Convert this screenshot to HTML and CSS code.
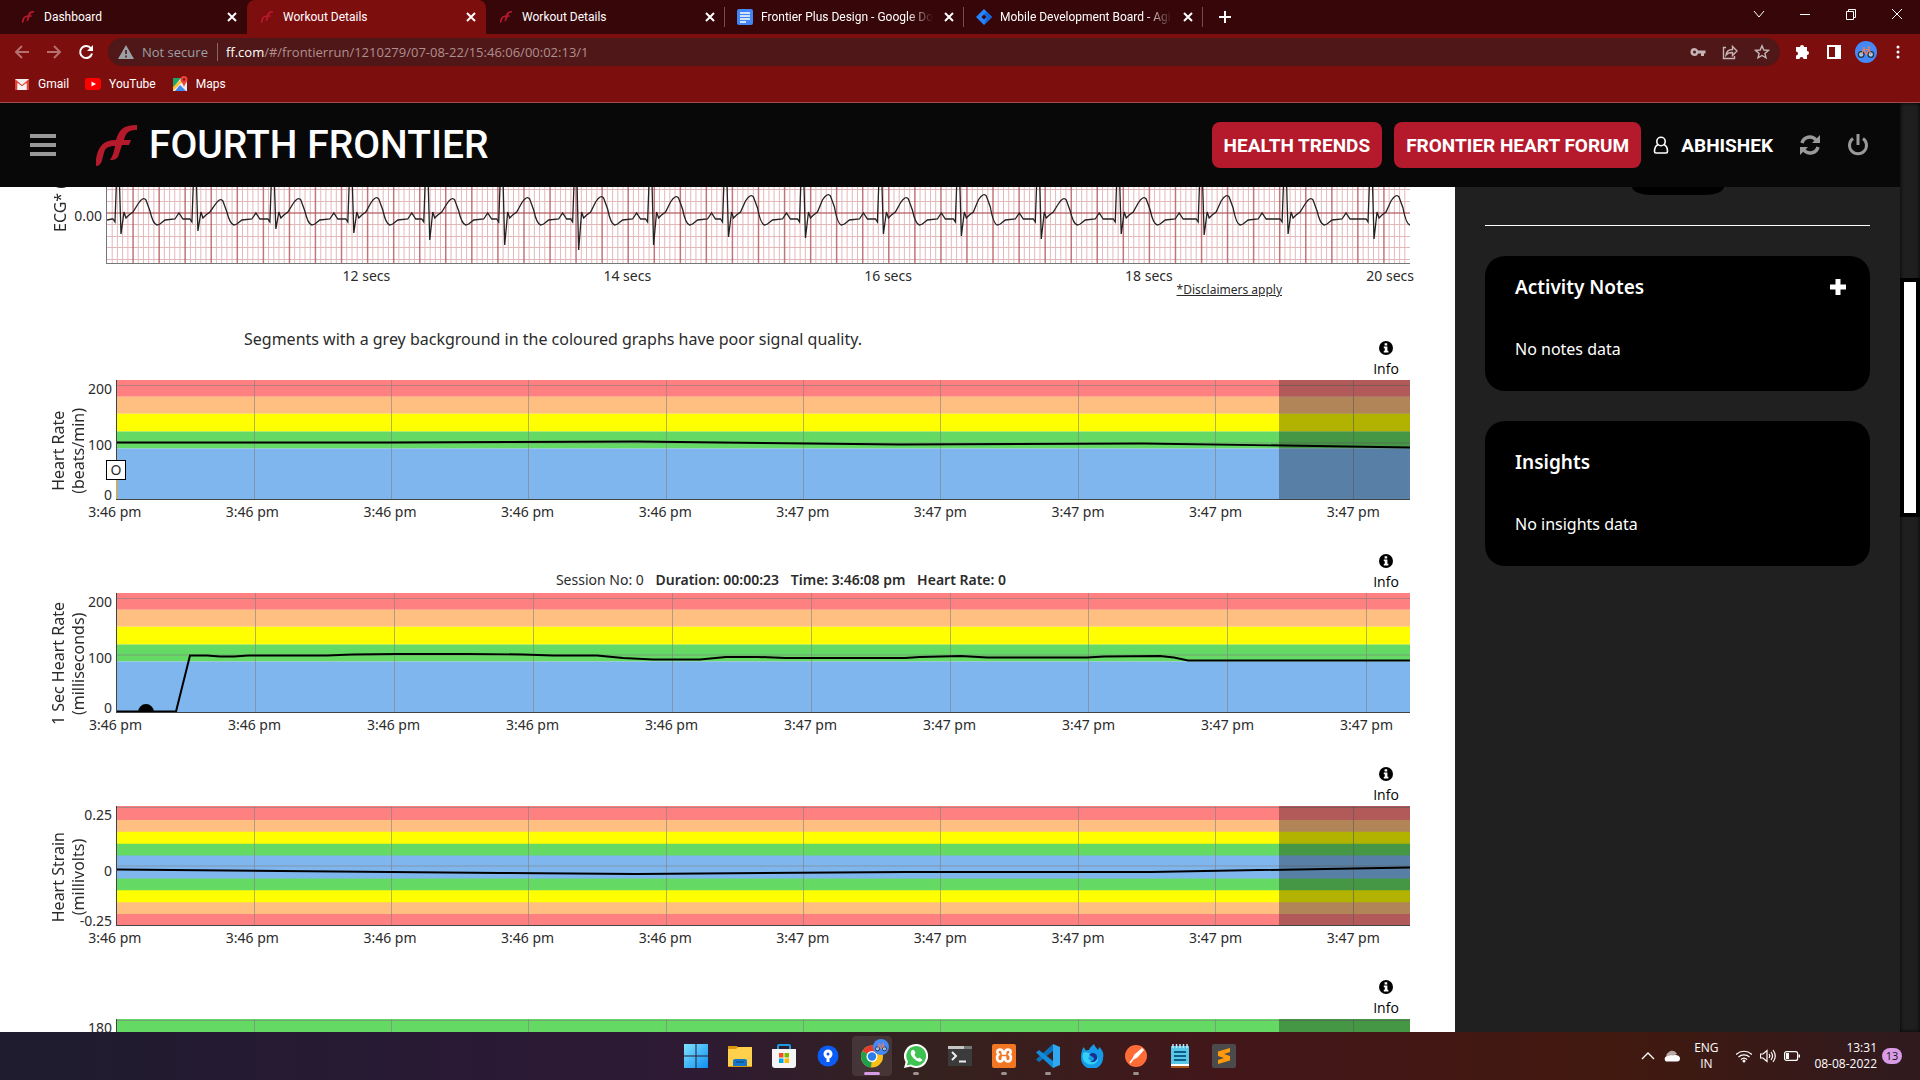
FILE: index.html
```html
<!DOCTYPE html>
<html lang="en">
<head>
<meta charset="utf-8">
<title>Workout Details</title>
<link rel="stylesheet" href="styles.css">
</head>
<body>
<svg class="defs" aria-hidden="true">
  <symbol id="ff" viewBox="0 0 41 41"><path d="M41 0v5c-8 0-11 2-13 10h7l-2 5h-7l-3 9c-1 4-3 6-9 6 3-4 4-9 5-14-7 0-10 2-11 7C6 34 6 41 0 41V34C2 22 7 15 20 15 23 5 27 0 41 0z" fill="#b41a2b"/></symbol>
  <symbol id="x" viewBox="0 0 16 16"><path d="M4 4l8 8M12 4l-8 8" stroke="#fff" stroke-width="2"/></symbol>
  <symbol id="info" viewBox="0 0 14 14"><circle cx="7" cy="7" r="7"/><path d="M5.6 2.2h2.6v2.2H5.600zM4.800 5.600h3.600v4.200h1V11.400H4.800V9.800h1V7.200h-1z" fill="#fff"/></symbol>
  <symbol id="bike" viewBox="0 0 22 22"><circle cx="11" cy="11" r="11" fill="#4489f7"/><g fill="none" stroke="#243447" stroke-width="1.300"><circle cx="6.200" cy="13.500" r="2.800" fill="#9fd0f5"/><circle cx="15.800" cy="13.500" r="2.800" fill="#9fd0f5"/></g><path d="M6.500 13.500l2-5h5.500l2 5M8.500 8.500l3 5 2.500-5M14 8l-.5-2h2M7 7h3" fill="none" stroke="#f0805a" stroke-width="1.200"/></symbol>
</svg>

<div class="browser">
  <div class="tabs">
    <div class="tab"><svg class="ico"><use href="#ff" x="2" y="2" width="12" height="12"/></svg><span class="tab-title">Dashboard</span><button class="bare" aria-label="Close tab"><svg class="ico"><use href="#x"/></svg></button></div>
    <div class="tab active"><svg class="ico"><use href="#ff" x="2" y="2" width="12" height="12"/></svg><span class="tab-title">Workout Details</span><button class="bare" aria-label="Close tab"><svg class="ico"><use href="#x"/></svg></button></div>
    <div class="tab ruled"><svg class="ico"><use href="#ff" x="2" y="2" width="12" height="12"/></svg><span class="tab-title">Workout Details</span><button class="bare" aria-label="Close tab"><svg class="ico"><use href="#x"/></svg></button></div>
    <div class="tab ruled"><svg class="ico" viewBox="0 0 16 16"><rect width="16" height="16" rx="2" fill="#4285f4"/><path d="M3 4h10M3 7h10M3 10h10M3 13h6" stroke="#fff" stroke-width="1.600"/></svg><span class="tab-title fade">Frontier Plus Design - Google Do</span><button class="bare" aria-label="Close tab"><svg class="ico"><use href="#x"/></svg></button></div>
    <div class="tab ruled"><svg class="ico" viewBox="0 0 16 16"><path d="M8 0l8 8-8 8-8-8z" fill="#2684ff"/><path d="M8 5l3 3-3 8 8-8-5-5z" fill="#1565d8"/><path d="M8 5.500L10.500 8 8 10.500 5.500 8z" fill="#370608"/></svg><span class="tab-title fade">Mobile Development Board - Agi</span><button class="bare" aria-label="Close tab"><svg class="ico"><use href="#x"/></svg></button></div>
    <button class="bare new-tab" aria-label="New tab"><svg class="ico" viewBox="0 0 16 16"><path d="M8 2v12M2 8h12" stroke="#fff" stroke-width="2"/></svg></button>
    <div class="window-buttons">
      <button class="bare" aria-label="Search tabs"><svg class="ico" viewBox="0 0 16 16"><path d="M3 5l5 6 5-6" class="thin"/></svg></button>
      <button class="bare" aria-label="Minimise"><svg class="ico" viewBox="0 0 16 16"><path d="M3 8.500h10" class="thin"/></svg></button>
      <button class="bare" aria-label="Restore"><svg class="ico" viewBox="0 0 16 16"><path d="M3.500 5.500h7v8h-7zM5.500 5.500v-2h7v8h-2" class="thin"/></svg></button>
      <button class="bare" aria-label="Close"><svg class="ico" viewBox="0 0 16 16"><path d="M3 3l10 10M13 3L3 13" class="thin"/></svg></button>
    </div>
  </div>

  <div class="toolbar">
    <div class="nav">
      <button class="bare" aria-label="Back"><svg class="ico" viewBox="0 0 16 16"><path d="M15 8H2M8 2L2 8l6 6" class="dim"/></svg></button>
      <button class="bare" aria-label="Forward"><svg class="ico" viewBox="0 0 16 16"><path d="M1 8h13M8 2l6 6-6 6" class="dim"/></svg></button>
      <button class="bare" aria-label="Reload"><svg class="ico" viewBox="0 0 16 16"><path d="M13 4.500A6 6 0 1 0 14 9.500" fill="none" stroke="#fff" stroke-width="2"/><path d="M15 1v6H9z" fill="#fff"/></svg></button>
    </div>
    <div class="omnibox">
      <svg class="ico" viewBox="0 0 16 16"><path d="M8 1l8 14H0z" fill="#9aa0a6"/><path d="M8 6v4M8 11.500v2" stroke="#4f1718" stroke-width="1.600"/></svg>
      <span class="secure">Not secure</span>
      <span class="url"><b>ff.com</b>/#/frontierrun/1210279/07-08-22/15:46:06/00:02:13/1</span>
      <button class="bare" aria-label="Passwords"><svg class="ico" viewBox="0 0 16 16"><path d="M4.500 4a4 4 0 1 0 3.700 5.500H11V12h3V9.500h1.500v-3H8.200A4 4 0 0 0 4.500 4zm0 2.500a1.500 1.500 0 1 1 0 3 1.500 1.500 0 0 1 0-3z" fill="#c5b5b5"/></svg></button>
      <button class="bare" aria-label="Share"><svg class="ico" viewBox="0 0 16 16"><path d="M4 3.500H1.500v11h11V12M4 11c.5-4 3-5.500 6.500-5.500V2.500L15 7l-4.500 4.500V8.500C7.500 8.500 5.500 9 4 11z" class="pale"/></svg></button>
      <button class="bare" aria-label="Bookmark"><svg class="ico" viewBox="0 0 16 16"><path d="M8 1.800l1.800 4.200 4.600.4-3.500 3 1.100 4.500L8 11.500l-4 2.400 1.100-4.500-3.500-3 4.600-.4z" class="pale"/></svg></button>
    </div>
    <div class="tools">
      <button class="bare" aria-label="Extensions"><svg class="ico" viewBox="0 0 16 16"><path d="M6 3a2 2 0 0 1 4 0h3v4a2 2 0 0 1 0 4v4H9.500a2 2 0 0 0-4 0H2v-3.500a2 2 0 0 0 0-4V3z" fill="#fff"/></svg></button>
      <button class="bare" aria-label="Side panel"><svg class="ico" viewBox="0 0 16 16"><path d="M1 1h14v14H1zM3 3v10h6V3z" fill="#fff" fill-rule="evenodd"/></svg></button>
      <button class="bare" aria-label="Profile"><svg class="avatar"><use href="#bike"/></svg></button>
      <button class="bare" aria-label="Menu"><svg class="ico" viewBox="0 0 16 16" fill="#fff"><circle cx="8" cy="3" r="1.500"/><circle cx="8" cy="8" r="1.500"/><circle cx="8" cy="13" r="1.500"/></svg></button>
    </div>
  </div>

  <div class="bookmarks">
    <a href="#"><svg class="ico" viewBox="0 0 16 16"><path d="M1 3h14v11H1z" fill="#eee"/><path d="M1 14V3l7 6 7-6v11h-2.500V7L8 10.500 3.500 7v7z" fill="#e34133"/><path d="M3.500 7v7h9V7L8 10.500z" fill="#f3f3f3"/></svg>Gmail</a>
    <a href="#"><svg class="ico" viewBox="0 0 16 16"><rect y="2" width="16" height="12" rx="3" fill="#f00"/><path d="M6.500 5.500v5L11 8z" fill="#fff"/></svg>YouTube</a>
    <a href="#"><svg class="ico" viewBox="0 0 16 16"><path d="M1 2h14v13H1z" fill="#eee"/><path d="M1 2h8L1 12z" fill="#1fa463"/><path d="M3 15l5-6 6 6z" fill="#4285f4"/><path d="M1 11l8-7 1 2-9 9z" fill="#fbc02d"/><path d="M12 0a3.500 3.500 0 0 1 3.500 3.500C15.500 6 13 7 12 11c-1-4-3.500-5-3.500-7.500A3.500 3.500 0 0 1 12 0z" fill="#ea4335"/><circle cx="12" cy="3.500" r="1.200" fill="#811"/></svg>Maps</a>
  </div>
</div>

<div class="page">
  <div class="app">
    <header class="site-header">
      <button class="bare" aria-label="Menu"><svg class="burger" viewBox="0 0 26 22"><path d="M0 2h26M0 11h26M0 20h26" stroke="#999" stroke-width="4"/></svg></button>
      <a class="brand" href="#"><svg class="brand-mark"><use href="#ff"/></svg>FOURTH FRONTIER</a>
      <button class="pill">HEALTH TRENDS</button>
      <button class="pill">FRONTIER HEART FORUM</button>
      <a class="user" href="#"><svg class="person" viewBox="0 0 16 18"><circle cx="8" cy="5.500" r="4.200"/><path d="M5 8.500C2 10 1.500 13 1.500 15.500 1.500 16.500 2 17 3 17h10c1 0 1.500-.5 1.500-1.500 0-2.500-.5-5.500-3.500-7"/></svg>ABHISHEK</a>
      <button class="bare" aria-label="Refresh"><svg class="act" viewBox="0 0 22 22"><path d="M3 9a8 8 0 0 1 14-3M19 13a8 8 0 0 1-14 3" fill="none" stroke="#999" stroke-width="3.500"/><path d="M21 1v8h-8zM1 21v-8h8z" fill="#999"/></svg></button>
      <button class="bare" aria-label="Log out"><svg class="act" viewBox="0 0 22 22"><path d="M6 4.500a8.500 8.500 0 1 0 10 0M11 0v11" fill="none" stroke="#999" stroke-width="3"/></svg></button>
    </header>

    <div class="columns">
      <main class="charts">
        <section class="ecg">
          <div class="ecg-title">ECG* (</div>
          <div class="ecg-zero">0.00</div>
          <div class="ecg-body">
            <svg class="ecg-plot" viewBox="0 0 1304 76" preserveAspectRatio="none">
              <path id="ecg-minor" class="minor"/><path id="ecg-major" class="major"/>
              <path d="M0 26h1304" class="major"/><path id="ecg-wave" class="wave"/>
            </svg>
            <div class="ecg-axis"><span>12 secs</span><span>14 secs</span><span>16 secs</span><span>18 secs</span><span>20 secs</span></div>
          </div>
        </section>
        <div class="disclaimer"><a href="#">*Disclaimers apply</a></div>

        <section class="chart">
          <div class="head">
            <p class="note">Segments with a grey background in the coloured graphs have poor signal quality.</p>
            <button class="info"><svg><use href="#info"/></svg>Info</button>
          </div>
          <div class="y-title">Heart Rate<br>(beats/min)</div>
          <div class="y-axis"><span>200</span><span>100</span><span>0</span></div>
          <div class="plot">
            <svg viewBox="0 0 1293 120" preserveAspectRatio="none">
              <path d="M0 0h1293v17H0z" class="red"/><path d="M0 17h1293v17H0z" class="orange"/><path d="M0 34h1293v18H0z" class="yellow"/><path d="M0 52h1293v17H0z" class="green"/><path d="M0 69h1293v51H0z" class="blue"/>
              <path class="grid" d="M0 5.500h1293M0 63.500h1293M137.500 0v120M274.500 0v120M411.500 0v120M549.500 0v120M686.500 0v120M823.500 0v120M961.500 0v120M1098.500 0v120M1236.500 0v120"/>
              <path d="M0 63H270L520 62 783 65 1026 64 1293 68" class="line"/>
              <path d="M1162 0h131v120h-131z" class="poor"/>
            </svg>
            <span class="marker">O</span>
          </div>
          <div class="x-axis"><span>3:46 pm</span><span>3:46 pm</span><span>3:46 pm</span><span>3:46 pm</span><span>3:46 pm</span><span>3:47 pm</span><span>3:47 pm</span><span>3:47 pm</span><span>3:47 pm</span><span>3:47 pm</span></div>
        </section>

        <section class="chart">
          <div class="head">
            <p class="readout">Session No: 0 <b>Duration: 00:00:23</b> <b>Time: 3:46:08 pm</b> <b>Heart Rate: 0</b></p>
            <button class="info"><svg><use href="#info"/></svg>Info</button>
          </div>
          <div class="y-title">1 Sec Heart Rate<br>(milliseconds)</div>
          <div class="y-axis"><span>200</span><span>100</span><span>0</span></div>
          <div class="plot">
            <svg viewBox="0 0 1293 120" preserveAspectRatio="none">
              <path d="M0 0h1293v17H0z" class="red"/><path d="M0 17h1293v17H0z" class="orange"/><path d="M0 34h1293v18H0z" class="yellow"/><path d="M0 52h1293v17H0z" class="green"/><path d="M0 69h1293v51H0z" class="blue"/>
              <path class="grid" d="M0 5.500h1293M0 62.500h1293M138.500 0v120M277.500 0v120M416.500 0v120M555.500 0v120M694.500 0v120M833.500 0v120M971.500 0v120M1110.500 0v120M1249.500 0v120"/>
              <path d="M0 119.500H59L73 63H90L103 64H117L131 63H210L235 62 280 61.500H350L406 62 436 63H480L506 65.500 536 67H583L609 64.500H641L668 65.500H788L803 64.500 844 63.500 870 65H970L987 64 1043 63.500 1057 65 1071 68H1293" class="line"/>
              <circle cx="29" cy="120" r="8"/>
            </svg>
          </div>
          <div class="x-axis wide"><span>3:46 pm</span><span>3:46 pm</span><span>3:46 pm</span><span>3:46 pm</span><span>3:46 pm</span><span>3:47 pm</span><span>3:47 pm</span><span>3:47 pm</span><span>3:47 pm</span><span>3:47 pm</span></div>
        </section>

        <section class="chart">
          <div class="head"><button class="info"><svg><use href="#info"/></svg>Info</button></div>
          <div class="y-title">Heart Strain<br>(millivolts)</div>
          <div class="y-axis"><span>0.25</span><span>0</span><span>-0.25</span></div>
          <div class="plot">
            <svg viewBox="0 0 1293 120" preserveAspectRatio="none">
              <path d="M0 0h1293v120H0z" class="red"/><path d="M0 14h1293v95H0z" class="orange"/><path d="M0 26h1293v71H0z" class="yellow"/><path d="M0 38h1293v47H0z" class="green"/><path d="M0 50h1293v23H0z" class="blue"/>
              <path class="grid" d="M0 1.500h1293M0 60.500h1293M137.500 0v120M274.500 0v120M411.500 0v120M549.500 0v120M686.500 0v120M823.500 0v120M961.500 0v120M1098.500 0v120M1236.500 0v120"/>
              <path d="M0 64L383 67.500 520 68.500 789 66.500H1034L1293 62" class="line"/>
              <path d="M1162 0h131v120h-131z" class="poor"/>
            </svg>
          </div>
          <div class="x-axis"><span>3:46 pm</span><span>3:46 pm</span><span>3:46 pm</span><span>3:46 pm</span><span>3:46 pm</span><span>3:47 pm</span><span>3:47 pm</span><span>3:47 pm</span><span>3:47 pm</span><span>3:47 pm</span></div>
        </section>

        <section class="chart">
          <div class="head"><button class="info"><svg><use href="#info"/></svg>Info</button></div>
          <div class="y-title"></div>
          <div class="y-axis"><span>180</span></div>
          <div class="plot">
            <svg viewBox="0 0 1293 120" preserveAspectRatio="none">
              <path d="M0 0h1293v120H0z" class="green"/>
              <path class="grid" d="M0 1.500h1293M137.500 0v120M274.500 0v120M411.500 0v120M549.500 0v120M686.500 0v120M823.500 0v120M961.500 0v120M1098.500 0v120M1236.500 0v120"/>
              <path d="M1162 0h131v120h-131z" class="poor"/>
            </svg>
          </div>
        </section>
      </main>

      <aside class="side">
        <div class="stub"></div>
        <hr>
        <section class="card">
          <div class="card-head"><h2>Activity Notes</h2><button class="bare" aria-label="Add note"><svg class="ico" viewBox="0 0 16 16"><path d="M8 0v16M0 8h16" stroke="#fff" stroke-width="5"/></svg></button></div>
          <p>No notes data</p>
        </section>
        <section class="card roomy">
          <div class="card-head"><h2>Insights</h2></div>
          <p>No insights data</p>
        </section>
      </aside>
    </div>
  </div>
  <div class="scrollbar"><div class="thumb"></div></div>
</div>

<footer class="taskbar">
  <div class="spacer"></div>
  <nav class="apps">
    <button class="bare" aria-label="Start"><svg viewBox="0 0 24 24"><defs><linearGradient id="w" x2="1" y2="1"><stop stop-color="#7fe3ff"/><stop offset="1" stop-color="#0b8fef"/></linearGradient></defs><path d="M0 0h11.500v11.500H0zM12.500 0H24v11.500H12.500zM0 12.500h11.500V24H0zM12.500 12.500H24V24H12.500z" fill="url(#w)"/></svg></button>
    <button class="bare" aria-label="File Explorer"><svg viewBox="0 0 24 24"><path d="M0 2h9l2 3h13v18H0z" fill="#d9980b"/><path d="M0 5h8l2-2h14v19H0z" fill="#ffd04c"/><path d="M5 22v-5q0-2 2-2h10q2 0 2 2v5z" fill="#1477c9"/><path d="M8 18h8" stroke="#0b5394" stroke-width="1.500"/></svg></button>
    <button class="bare" aria-label="Store"><svg viewBox="0 0 24 24"><path d="M6 6V2q0-1 1-1h10q1 0 1 1v4" fill="none" stroke="#1b9de2" stroke-width="2"/><path d="M0 5h24v16q0 3-3 3H3q-3 0-3-3z" fill="#f5f5f5"/><path d="M7 9h4.500v4.500H7z" fill="#f25022"/><path d="M12.500 9H17v4.500h-4.500z" fill="#7fba00"/><path d="M7 14.500h4.500V19H7z" fill="#00a4ef"/><path d="M12.500 14.500H17V19h-4.500z" fill="#ffb900"/></svg></button>
    <button class="bare" aria-label="Maps"><svg viewBox="0 0 24 24"><circle cx="12" cy="12" r="10.500" fill="#0a5cf5"/><circle cx="12" cy="10" r="4.500" fill="#fff"/><path d="M10.500 10h3v8h-3z" fill="#fff"/><circle cx="12" cy="10" r="1.500" fill="#0a5cf5"/></svg></button>
    <button class="bare current" aria-label="Chrome"><svg viewBox="0 0 24 24"><circle cx="12" cy="12.500" r="11" fill="#fbc116"/><path d="M12 12.500L2.500 7A11 11 0 0 1 21.500 7z" fill="#e33b2e"/><path d="M12 12.500L2.500 7a11 11 0 0 0 8.500 16.500z" fill="#1fa04c"/><circle cx="12" cy="12.500" r="5.500" fill="#fff"/><circle cx="12" cy="12.500" r="4.200" fill="#2b7de9"/></svg><svg class="badge" viewBox="0 0 22 22"><use href="#bike" width="22" height="22"/></svg></button>
    <button class="bare open" aria-label="WhatsApp"><svg viewBox="0 0 24 24"><path d="M12 0a12 12 0 1 1-5.500 22.600L0 24l1.600-6A12 12 0 0 1 12 0z" fill="#fff"/><path d="M12 2a10 10 0 1 1-5 18.600L2.800 21.500 4 17.500A10 10 0 0 1 12 2z" fill="#3ec251"/><path d="M8 6c-3 3 0 7 3 9.500s6 3 7.500.5l-3-2.500-1.500 1c-2-1-3-2.500-3.500-4l1-1.500L10 6z" fill="#fff"/></svg></button>
    <button class="bare" aria-label="Terminal"><svg viewBox="0 0 24 24"><path d="M0 2h24v20H0z" fill="#3b3b3b"/><path d="M0 2h16v3H0z" fill="#c5c5c5"/><path d="M16 2h8v3h-8z" fill="#777"/><path d="M4 8l4 4-4 4M11 17.500h7" fill="none" stroke="#eee" stroke-width="2"/></svg></button>
    <button class="bare open" aria-label="XAMPP"><svg viewBox="0 0 24 24"><rect width="24" height="24" rx="2" fill="#f37623"/><path d="M8 5.500c3 0 3 3 3 4h2c0-1 0-4 3-4s3.500 3 1.500 5c2.500 2 1.500 7-1.500 7s-3-3-3-4h-2c0 1 0 4-3 4s-4-5-1.500-7c-2-2-1.500-5 1.500-5z" fill="none" stroke="#fff" stroke-width="2.600"/></svg></button>
    <button class="bare open" aria-label="VS Code"><svg viewBox="0 0 24 24"><path d="M17 0l7 3v18l-7 3z" fill="#2fa8f0"/><path d="M17 0v7L3 18l-3-2.500z" fill="#0a72bd"/><path d="M17 24v-7L3 6 0 8.500z" fill="#138ddb"/></svg></button>
    <button class="bare" aria-label="Firefox"><svg viewBox="0 0 24 24"><path d="M14 0c1 3 3 4 4 6l1.500-3C23 7 24 10 23 14a11 11 0 0 1-22 0C1 10 1.500 7 3.500 3L6 6.500 9 6c1-3 3-4 5-6z" fill="#159be8"/><path d="M3 9c3-2 6 0 9 1l-4 4c2 4 8 4 10-1 1 6-5 9-10 7s-6-7-5-11z" fill="#35d0f7"/><path d="M9 11a4.500 4.500 0 1 1 1 6c4 0 5-2 3-4z" fill="#1a2f8e"/></svg></button>
    <button class="bare open" aria-label="Postman"><svg viewBox="0 0 24 24"><circle cx="12" cy="12" r="11" fill="#ff6c37"/><path d="M18 5l-7 6-2 4 4-2 6-7zM9 15l-3 4" stroke="#fff" stroke-width="1.500" fill="#fff"/></svg></button>
    <button class="bare" aria-label="Notepad"><svg viewBox="0 0 24 24"><path d="M3 2h18v20H3z" fill="#59c8e8"/><path d="M3 21h18v3H3z" fill="#a6541a"/><path d="M3 20h18v2H3z" fill="#fff"/><path d="M6 8h12M6 12h12M6 16h12" stroke="#0d5f85" stroke-width="1.800"/><path d="M5 0v4M8.500 0v4M12 0v4M15.500 0v4M19 0v4" stroke="#bdeaf7" stroke-width="1.500"/></svg></button>
    <button class="bare" aria-label="Sublime Text"><svg viewBox="0 0 24 24"><rect width="24" height="24" rx="2" fill="#4b4b4b"/><path d="M18 4v4l-6 2 6 2v4.500L6 20v-4l6-2-6-2V7.500z" fill="#ff9a0c"/></svg></button>
  </nav>
  <div class="tray">
    <svg viewBox="0 0 16 16"><path d="M2 11l6-6 6 6" fill="none" stroke="#fff" stroke-width="1.300"/></svg>
    <svg viewBox="0 0 16 16"><path d="M3 10a4 4 0 0 1 2-6c2-2 6-2 8 2z" fill="#b9aaa9"/><path d="M2 13.500a3 3 0 0 1 0-5c2 0 4-2 7-1 1-1 7-1 7 3 0 2-1 3-3 3z" fill="#fff"/></svg>
    <div class="lang">ENG<br>IN</div>
    <svg viewBox="0 0 16 16"><path d="M0 6.500a11.500 11.500 0 0 1 16 0M2.500 9a8 8 0 0 1 11 0M5 11.500a4.500 4.500 0 0 1 6 0" fill="none" stroke="#fff" stroke-width="1.200"/><circle cx="8" cy="13" r="1.500" fill="#fff"/></svg>
    <svg viewBox="0 0 16 16"><path d="M.5 6H3l4-3.500v11L3 10H.500zM9 6q1.500 2 0 4M11 4q3 4 0 8M13 2q4.500 6 0 12" fill="none" stroke="#fff" stroke-width="1.200"/></svg>
    <svg viewBox="0 0 16 16"><rect x=".6" y="3.600" width="13" height="8.800" rx="2" fill="none" stroke="#fff" stroke-width="1.200"/><path d="M2 5h3v6H2zM14.500 6.500H16v3h-1.500z" fill="#fff"/></svg>
    <div class="clock">13:31<br>08-08-2022</div>
    <span class="count">13</span>
  </div>
</footer>
<script src="script.js"></script>
</body>
</html>
```
FILE: styles.css
```css
* { box-sizing: border-box; }
body {
  margin: 0;
  height: 100vh;
  display: flex;
  flex-direction: column;
  overflow: hidden;
  font-family: "Noto Sans", sans-serif;
  font-size: 14px;
  color: #2b2b2b;
  background: #fff;
}
p, h2 { margin: 0; }
.defs { position: absolute; width: 0; height: 0; }
.bare {
  display: flex;
  align-items: center;
  justify-content: center;
  padding: 0;
  border: 0;
  background: none;
  color: inherit;
}
.ico { display: block; flex: none; width: 16px; height: 16px; }
.thin { fill: none; stroke: #fff; stroke-width: 1; }
.dim { fill: none; stroke: #b57070; stroke-width: 2; }
.pale { fill: none; stroke: #c5b5b5; stroke-width: 1.4; }

/* Browser frame */
.browser {
  flex: none;
  background: #7c0e0e;
  border-bottom: 1px solid #a34a4a;
  color: #fff;
  font-family: Roboto, sans-serif;
  font-size: 12px;
}
.tabs { display: flex; height: 34px; padding-left: 8px; background: #370608; }
.tab {
  position: relative;
  flex: 0 1 239px;
  min-width: 0;
  display: flex;
  align-items: center;
  gap: 8px;
  padding: 0 7px 0 12px;
}
.tab.active { background: #7c0e0e; border-radius: 8px 8px 0 0; }
.tab.ruled::after {
  content: "";
  position: absolute;
  right: 0;
  top: 7px;
  height: 20px;
  border-right: 1px solid #7a4a4b;
}
.tab-title { flex: 1; overflow: hidden; white-space: nowrap; }
.tab-title.fade { mask-image: linear-gradient(to right, #000 85%, transparent); }
.new-tab { width: 44px; }
.window-buttons { display: flex; margin-left: auto; padding-bottom: 6px; }
.window-buttons .bare { width: 46px; }
.toolbar { display: flex; align-items: center; height: 36px; }
.nav { display: flex; gap: 16px; padding: 0 14px; }
.omnibox {
  flex: 1;
  display: flex;
  align-items: center;
  gap: 16px;
  height: 28px;
  padding: 0 10px;
  border-radius: 14px;
  background: #4f1718;
  font-family: "Open Sans", sans-serif;
  font-size: 13px;
}
.secure { margin-left: -8px; padding-right: 9px; border-right: 1px solid #8c6464; color: #9aa0a6; }
.url { flex: 1; margin-left: -8px; color: #b08f8f; white-space: nowrap; }
.url b { font-weight: 400; color: #fff; }
.tools { display: flex; padding: 0 6px; }
.tools .bare { width: 32px; }
.avatar { width: 22px; height: 22px; }
.bookmarks { display: flex; gap: 16px; height: 32px; padding-left: 14px; }
.bookmarks a { display: flex; align-items: center; gap: 8px; padding-bottom: 4px; color: #fff; text-decoration: none; }

/* Site header */
.page { flex: 1; min-height: 0; display: flex; }
.app { flex: 1; min-width: 0; display: flex; flex-direction: column; }
.site-header {
  flex: none;
  display: flex;
  align-items: center;
  gap: 12px;
  height: 84px;
  padding: 0 31px 0 30px;
  background: #080808;
  color: #fff;
  font-family: Roboto, sans-serif;
}
.burger { width: 26px; height: 22px; }
.brand {
  display: flex;
  align-items: center;
  gap: 12px;
  margin: 0 auto 0 28px;
  color: #fff;
  font-size: 39px;
  font-weight: 500;
  text-decoration: none;
}
.brand-mark { width: 41px; height: 41px; }
.pill {
  height: 46px;
  padding: 0 12px;
  border: 0;
  border-radius: 8px;
  background: #b41a2b;
  color: #fff;
  font: 700 19px Roboto, sans-serif;
}
.user { display: flex; align-items: center; gap: 12px; color: #fff; font-size: 19px; font-weight: 700; text-decoration: none; }
.person { width: 16px; height: 18px; fill: none; stroke: #fff; stroke-width: 1.6; }
.act { width: 22px; height: 22px; margin-left: 14px; }

/* Charts */
.columns { flex: 1; min-height: 0; display: flex; }
.charts { flex: 1; min-width: 0; padding-right: 45px; overflow: hidden; background: #fff; }
.ecg { display: grid; grid-template-columns: 70px 36px 1fr; height: 95px; }
.ecg-title {
  align-self: start;
  justify-self: end;
  height: 45px;
  writing-mode: vertical-rl;
  transform: rotate(180deg);
  font-size: 16px;
  line-height: 20px;
  white-space: nowrap;
}
.ecg-zero { padding: 20px 4px 0 0; line-height: 18px; text-align: right; }
.ecg-plot { display: block; width: 100%; height: 77px; border: solid #777; border-width: 0 0 1px 1px; }
.minor, .major, .wave { fill: none; vector-effect: non-scaling-stroke; }
.minor { stroke: #b0373f; stroke-width: 1; opacity: .35; }
.major { stroke: #b4555b; stroke-width: 1.5; opacity: .8; }
.wave { stroke: #222; stroke-width: 1.3; }
.ecg-axis {
  display: grid;
  grid-template-columns: repeat(4, 31fr) 16fr;
  margin: 0 -4px 0 130px;
  line-height: 24px;
  text-align: center;
}
.ecg-axis span:last-child { text-align: right; }
.disclaimer { height: 44px; padding-right: 128px; line-height: 16px; text-align: right; font-size: 12px; }
.disclaimer a { color: #2b2b2b; }
.chart {
  display: grid;
  grid-template: 54px 120px 24px / 88px 28px 1fr;
  margin-bottom: 15px;
}
.head { grid-column: 1 / -1; display: flex; align-items: flex-end; justify-content: flex-end; }
.info {
  display: flex;
  flex-direction: column;
  align-items: center;
  gap: 4px;
  width: 48px;
  padding: 0 0 1px;
  border: 0;
  background: none;
  color: #000;
  font: 14px/20px "Open Sans", sans-serif;
}
.info svg { width: 14px; height: 14px; }
.note { align-self: flex-start; margin-right: auto; padding-left: 244px; font-size: 16px; line-height: 26px; }
.readout { flex: 1; padding: 0 0 3px 200px; line-height: 20px; text-align: center; font-size: 14px; }
.readout b { margin-left: 8px; font-weight: 600; }
.y-title {
  justify-self: end;
  align-self: center;
  width: 40px;
  margin: 22px 0 0;
  writing-mode: vertical-rl;
  transform: rotate(180deg);
  text-align: center;
  font-size: 16px;
  line-height: 20px;
  white-space: nowrap;
}
.y-axis {
  display: grid;
  grid-template: 56px 50px 18px / minmax(0, 1fr);
  justify-items: end;
  margin-bottom: -4px;
  padding-right: 4px;
  line-height: 18px;
  white-space: nowrap;
}
.plot { position: relative; border: solid #444; border-width: 0 0 1px 1px; }
.plot svg { display: block; width: 100%; height: 119px; }
.red { fill: #ff8080; }
.orange { fill: #ffbf80; }
.yellow { fill: #ff0; }
.green { fill: #64d964; }
.blue { fill: #7fb6ee; }
.grid { fill: none; stroke: #808080; stroke-opacity: .6; }
.line { fill: none; stroke: #000; stroke-width: 2; }
.poor { fill: #000; fill-opacity: .3; }
.marker {
  position: absolute;
  left: -11px;
  bottom: 19px;
  width: 20px;
  height: 20px;
  border: 1px solid #000;
  background: #fff;
  line-height: 18px;
  text-align: center;
}
.marker::after { content: ""; position: absolute; left: 9px; top: 19px; height: 19px; border-left: 1px solid #ffa500; }
.x-axis {
  grid-column: 3;
  display: grid;
  grid-template-columns: repeat(10, 1fr);
  margin: 0 -12px 0 -70px;
  line-height: 24px;
  text-align: center;
}
.x-axis.wide { margin: 0 -26px 0 -70px; }

/* Side column */
.side { flex: none; width: 445px; padding: 0 30px; background: #202020; color: #fff; }
.stub { width: 92px; height: 8px; margin: 0 auto; border-radius: 0 0 20px 20px / 0 0 8px 8px; background: #000; }
.side hr { height: 1px; margin: 30px 0; border: 0; background: #fff; }
.card { margin-bottom: 30px; padding: 16px 24px 29px 30px; border-radius: 20px; background: #000; }
.card.roomy { padding-top: 26px; }
.card-head { display: flex; justify-content: space-between; align-items: center; height: 30px; }
.card h2 { font-size: 19px; font-weight: 600; line-height: 30px; }
.card p { margin-top: 34px; font-size: 16px; line-height: 26px; }
.scrollbar { flex: none; width: 20px; padding-top: 175px; background: #1f1f1f; box-shadow: inset 0 0 4px #000; }
.thumb { height: 239px; border: 4px solid #000; background: #fff; }

/* Taskbar */
.taskbar {
  flex: none;
  display: flex;
  align-items: center;
  height: 48px;
  background: linear-gradient(to right, #1e1c2e, #2a1934 25%, #2e1a33 36%, #34221f 48%, #43161a 64%, #42190f 84%, #2f1a1f);
  color: #fff;
  font-family: "Open Sans", sans-serif;
  font-size: 12px;
}
.spacer, .tray { flex: 1; padding-right: 18px; }
.apps { display: flex; gap: 4px; }
.apps .bare { position: relative; width: 40px; height: 40px; border-radius: 4px; }
.apps svg { width: 24px; height: 24px; }
.apps .current { background: #ffffff18; }
.apps .badge { position: absolute; right: 3px; top: 3px; width: 16px; height: 16px; }
.current::after, .open::after {
  content: "";
  position: absolute;
  bottom: 1px;
  width: 6px;
  height: 3px;
  border-radius: 2px;
  background: #9d9090;
}
.current::after { width: 16px; background: #d99be6; }
.tray { display: flex; align-items: center; justify-content: flex-end; gap: 8px; line-height: 16px; }
.tray svg { width: 16px; height: 16px; }
.lang { width: 36px; margin-right: 4px; text-align: center; }
.clock { margin-left: 6px; text-align: right; }
.count { width: 20px; height: 16px; margin-left: -3px; border-radius: 8px; background: #d99be6; color: #111; font-size: 11px; text-align: center; }
```
FILE: script.js
```js
// ECG strip: x in plot units (10s to 20s), y in pixels below the header.
const WIDTH = 1304;
const HEIGHT = 76;
const STEP = WIDTH / 50;

let minor = '';
let major = '';
for (let i = 1; i < 250; i++) {
  const x = (i * STEP / 5).toFixed(1);
  if (i % 5) minor += `M${x} 0V${HEIGHT}`;
  else major += `M${x} 0V${HEIGHT}`;
}
for (const y of [2.5, 14.5, 37.5, 49.5, 60.5, 72.5]) minor += `M0 ${y}H${WIDTH}`;
document.getElementById('ecg-minor').setAttribute('d', minor);
document.getElementById('ecg-major').setAttribute('d', major);

// One entry per beat: R position, S depth, T peak.
const beats = [
  [11, 47, 12], [88, 44, 13], [166, 42, 12], [244, 46, 11], [320, 53, 12], [395, 58, 11],
  [469, 63, 10], [544, 58, 10], [619, 50, 9], [696, 51, 8], [774, 47, 11], [852, 49, 8],
  [932, 52, 12], [1012, 47, 11], [1095, 48, 9], [1179, 47, 12], [1265, 52, 9]
];
let wave = 'M0 33L5 32';
for (const [x, s, t] of beats) {
  wave += `L${x - 5} 32L${x - 3} 35L${x - 1} -20L${x + 1} -20L${x + 3} ${s}L${x + 6} 25L${x + 8} 31`
    + `L${x + 11} 28L${x + 15} 25L${x + 20} ${t + 5}Q${x + 25} ${t - 3} ${x + 28} ${t + 1}`
    + `L${x + 32} ${t + 12}Q${x + 35} 37 ${x + 39} 38L${x + 42} 37L${x + 47} 33L${x + 57} 32`
    + `L${x + 61} 26L${x + 65} 32L${x + 70} 32`;
}
document.getElementById('ecg-wave').setAttribute('d', wave);
```
